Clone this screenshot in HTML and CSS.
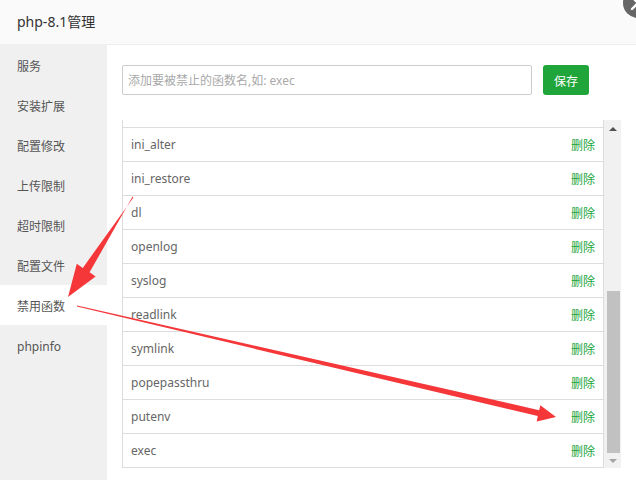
FILE: index.html
```html
<!DOCTYPE html>
<html lang="zh-CN">
<head>
<meta charset="utf-8">
<title>php-8.1管理</title>
<link rel="stylesheet" href="styles.css">
</head>
<body>
<div class="layer">
  <header class="layer-title">php-8.1管理</header>
  <span class="close-btn">
    <svg viewBox="0 0 30 30" width="30" height="30"><path d="M9 9 L21 21 M21 9 L9 21" stroke="#fff" stroke-width="2.4" stroke-linecap="round" fill="none"/></svg>
  </span>
  <div class="layer-body">
    <nav class="side">
      <div class="side-item">服务</div>
      <div class="side-item">安装扩展</div>
      <div class="side-item">配置修改</div>
      <div class="side-item">上传限制</div>
      <div class="side-item">超时限制</div>
      <div class="side-item">配置文件</div>
      <div class="side-item active">禁用函数</div>
      <div class="side-item">phpinfo</div>
    </nav>
    <main class="content">
      <div class="add-row">
        <input class="fn-input" type="text" placeholder="添加要被禁止的函数名,如: exec">
        <button class="btn-save">保存</button>
      </div>
      <div class="list-wrap">
        <div class="list-view">
          <div class="row row-partial"></div>
          <div class="row"><span class="fn">ini_alter</span><a class="del">删除</a></div>
          <div class="row"><span class="fn">ini_restore</span><a class="del">删除</a></div>
          <div class="row"><span class="fn">dl</span><a class="del">删除</a></div>
          <div class="row"><span class="fn">openlog</span><a class="del">删除</a></div>
          <div class="row"><span class="fn">syslog</span><a class="del">删除</a></div>
          <div class="row"><span class="fn">readlink</span><a class="del">删除</a></div>
          <div class="row"><span class="fn">symlink</span><a class="del">删除</a></div>
          <div class="row"><span class="fn">popepassthru</span><a class="del">删除</a></div>
          <div class="row"><span class="fn">putenv</span><a class="del">删除</a></div>
          <div class="row"><span class="fn">exec</span><a class="del">删除</a></div>
        </div>
        <div class="scrollbar">
          <span class="sb-btn"><span class="arrow-up"></span></span>
          <div class="track"><div class="thumb"></div></div>
          <span class="sb-btn"><span class="arrow-down"></span></span>
        </div>
      </div>
    </main>
  </div>
  <svg class="annot" viewBox="0 0 636 480" width="636" height="480">
    <polygon fill="#f5373a" points="132.6,196.6 89.6,272.3 95.6,276.5 68,297 76.8,263.7 82.8,267.9 133.4,197.4"/>
    <polygon fill="#f5373a" points="77.1,305.4 539.2,410.2 540.3,405.3 556,417 536.7,421.5 537.8,416 76.9,306.6"/>
  </svg>
</div>
</body>
</html>
```

FILE: styles.css
```css
html, body {
  margin: 0;
  padding: 0;
  background: #fff;
}
body {
  width: 636px;
  height: 480px;
  overflow: hidden;
  font-family: "Noto Sans", "Noto Sans CJK SC", sans-serif;
}
.layer {
  position: relative;
  width: 636px;
  height: 480px;
  overflow: hidden;
  display: flex;
  flex-direction: column;
}
.layer-title {
  height: 44px;
  line-height: 44px;
  border-bottom: 1px solid #eee;
  background: #fafafa;
  padding-left: 17px;
  font-size: 14px;
  color: #333;
  flex: none;
}
.close-btn {
  position: absolute;
  left: 623px;
  top: -12px;
  width: 30px;
  height: 30px;
  border-radius: 50%;
  background: #666;
  display: block;
}
.close-btn svg { display: block; }
.layer-body {
  flex: 1;
  display: flex;
  min-height: 0;
}
.side {
  width: 107px;
  flex: none;
  background: #f0f0f0;
}
.side-item {
  height: 40px;
  line-height: 43px;
  overflow: hidden;
  padding-left: 17px;
  font-size: 12px;
  color: #555;
}
.side-item.active {
  background: #fff;
}
.content {
  flex: 1;
  padding: 20px 0 0 15px;
  min-width: 0;
}
.add-row {
  display: flex;
  gap: 11px;
  height: 30px;
}
.fn-input {
  width: 410px;
  height: 30px;
  box-sizing: border-box;
  border: 1px solid #ccc;
  border-radius: 2px;
  padding: 0 5px;
  font-family: "Noto Sans", "Noto Sans CJK SC", sans-serif;
  font-size: 12px;
  color: #555;
  outline: none;
  margin: 0;
}
.fn-input::placeholder { color: #a9a9a9; }
.btn-save {
  width: 46px;
  height: 30px;
  border: none;
  border-radius: 3px;
  background: #20a53a;
  color: #fff;
  font-family: "Noto Sans CJK SC", sans-serif;
  font-size: 12px;
  padding: 0;
  margin: 0;
}
.list-wrap {
  margin-top: 25px;
  width: 499px;
  height: 348px;
  display: flex;
}
.list-view {
  flex: 1;
  overflow: hidden;
  display: flex;
  flex-direction: column;
  justify-content: flex-end;
  border-left: 1px solid #ddd;
  border-right: 1px solid #ddd;
}
.row {
  flex: none;
  height: 33px;
  border-bottom: 1px solid #ddd;
  display: flex;
  align-items: center;
  justify-content: space-between;
  padding: 0 8px;
  font-size: 12px;
}
.fn { color: #666; }
.del {
  color: #20a53a;
  font-family: "Noto Sans CJK SC", sans-serif;
}
.scrollbar {
  width: 17px;
  flex: none;
  background: #f1f1f1;
  display: flex;
  flex-direction: column;
}
.sb-btn {
  height: 17px;
  flex: none;
  display: flex;
  align-items: center;
  justify-content: center;
}
.sb-btn:last-child { height: 15px; }
.arrow-up {
  width: 0;
  height: 0;
  border-left: 4px solid transparent;
  border-right: 4px solid transparent;
  border-bottom: 4px solid #505050;
}
.arrow-down {
  width: 0;
  height: 0;
  border-left: 4px solid transparent;
  border-right: 4px solid transparent;
  border-top: 4px solid #a3a3a3;
}
.track {
  flex: 1;
  display: flex;
  flex-direction: column;
  justify-content: flex-end;
  padding: 0 1px 0 3px;
}
.thumb {
  height: 162px;
  background: #c1c1c1;
}
.annot {
  position: absolute;
  left: 0;
  top: 0;
  pointer-events: none;
}
```
